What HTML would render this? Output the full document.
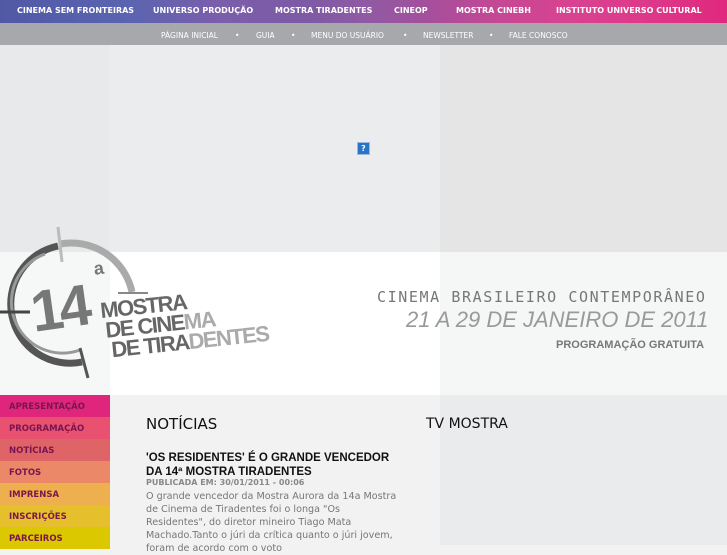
<!DOCTYPE html>
<html><head><meta charset="utf-8"><style>
*{margin:0;padding:0;box-sizing:border-box}
body{width:727px;height:545px;overflow:hidden;font-family:"DejaVu Sans","Liberation Sans",sans-serif;background:#f2f2f2;position:relative}
.a{position:absolute}
#top{left:0;top:0;width:727px;height:23px;background:linear-gradient(90deg,#5159a6 0%,#5b64b0 18%,#7a5eab 30%,#7d5aa5 42%,#8f5aa3 50%,#a2509d 58%,#c34894 68%,#d84391 78%,#dd3a8a 88%,#e0287e 100%)}
#top span{position:absolute;top:6px;color:#fff;font-weight:bold;font-size:8px;letter-spacing:0}
#nav{left:0;top:23px;width:727px;height:22px;background:#a7a8ab}
#nav span{position:absolute;top:8px;color:#fff;font-size:7.5px}
.m{position:absolute;left:0;width:110px;height:22px;font-size:8.5px;font-weight:bold;color:#7a1450;padding:7px 0 0 9px}
</style></head><body>
<div class="a" id="top">
<span style="left:17px">CINEMA SEM FRONTEIRAS</span>
<span style="left:153px">UNIVERSO PRODUÇÃO</span>
<span style="left:275px">MOSTRA TIRADENTES</span>
<span style="left:394px">CINEOP</span>
<span style="left:456px">MOSTRA CINEBH</span>
<span style="left:556px">INSTITUTO UNIVERSO CULTURAL</span>
</div>
<div class="a" id="nav">
<span style="left:161px">PÁGINA INICIAL</span><span style="left:235px">•</span>
<span style="left:256px">GUIA</span><span style="left:291px">•</span>
<span style="left:311px">MENU DO USUÁRIO</span><span style="left:403px">•</span>
<span style="left:423px">NEWSLETTER</span><span style="left:489px">•</span>
<span style="left:509px">FALE CONOSCO</span>
</div>
<div class="a" style="left:0;top:45px;width:110px;height:207px;background:#e8e9eb"></div>
<div class="a" style="left:110px;top:45px;width:330px;height:207px;background:#ebecee"></div>
<div class="a" style="left:440px;top:45px;width:287px;height:207px;background:#e5e5e5"></div>
<div class="a" style="left:357px;top:142px;width:13px;height:13px;background:#2a74c8;border:1px solid #9bb8e0;color:#fff;font-size:8px;text-align:center;line-height:11px;font-weight:bold">?</div>
<div class="a" style="left:0;top:252px;width:110px;height:143px;background:#f6f7f7"></div>
<div class="a" style="left:110px;top:252px;width:330px;height:143px;background:#fff"></div>
<div class="a" style="left:440px;top:252px;width:287px;height:143px;background:#f5f6f6"></div>
<svg class="a" style="left:0;top:222px" width="300" height="160">
<path d="M58 24 A58 58 0 1 0 82 140" fill="none" stroke="#555" stroke-width="7"/>
<path d="M45 32 A48 48 0 1 0 80 128" fill="none" stroke="#999" stroke-width="3"/>
<path d="M60 22 A62 62 0 0 1 132 70" fill="none" stroke="#aaa" stroke-width="7"/>
<line x1="58" y1="5" x2="62" y2="40" stroke="#bbb" stroke-width="3"/>
<line x1="0" y1="90" x2="30" y2="90" stroke="#444" stroke-width="3"/>
<line x1="80" y1="126" x2="88" y2="156" stroke="#555" stroke-width="3"/>
<line x1="118" y1="71" x2="148" y2="71" stroke="#888" stroke-width="2"/>
<g transform="rotate(-8 60 80)">
<text x="30" y="106" font-family="Liberation Sans" font-weight="bold" font-size="58" fill="#777" letter-spacing="-4">14</text>
<text x="98" y="58" font-family="Liberation Sans" font-weight="bold" font-size="18" fill="#777">a</text></g>
<g transform="rotate(-6 180 110)" font-family="Liberation Sans" font-weight="bold" font-size="22" fill="#666" letter-spacing="-1.5">
<text x="103" y="88">MOSTRA</text>
<text x="106" y="108">DE CINE<tspan fill="#aaa">MA</tspan></text>
<text x="110" y="128">DE TIRA<tspan fill="#aaa">DENTES</tspan></text></g>
</svg>
<div class="a" style="left:377px;top:288px;font-size:15px;color:#777;letter-spacing:1.6px;font-family:'DejaVu Sans Mono',monospace">CINEMA BRASILEIRO CONTEMPORÂNEO</div>
<div class="a" style="left:406px;top:307px;font-size:22px;color:#999;font-style:italic;font-family:'Liberation Sans',sans-serif">21 A 29 DE JANEIRO DE 2011</div>
<div class="a" style="left:556px;top:339px;font-size:11px;color:#777;font-weight:bold;font-family:'Liberation Sans',sans-serif">PROGRAMAÇÃO GRATUITA</div>
<div class="a" style="left:440px;top:395px;width:287px;height:150px;background:#eaebed"></div>
<div class="m" style="top:395px;background:#e0267c">APRESENTAÇÃO</div>
<div class="m" style="top:417px;background:#e8516f">PROGRAMAÇÃO</div>
<div class="m" style="top:439px;background:#de6468">NOTÍCIAS</div>
<div class="m" style="top:461px;background:#ea8868">FOTOS</div>
<div class="m" style="top:483px;background:#eeb04e">IMPRENSA</div>
<div class="m" style="top:505px;background:#e6c02c">INSCRIÇÕES</div>
<div class="m" style="top:527px;background:#dcc800">PARCEIROS</div>
<div class="a" style="left:146px;top:415px;font-size:15px;color:#111">NOTÍCIAS</div>
<div class="a" style="left:426px;top:416px;font-size:14px;color:#111">TV MOSTRA</div>
<div class="a" style="left:146px;top:451px;width:260px;font-size:11.5px;font-weight:bold;color:#111;line-height:14px;font-family:'Liberation Sans',sans-serif;white-space:nowrap">'OS RESIDENTES' É O GRANDE VENCEDOR<br>DA 14ª MOSTRA TIRADENTES</div>
<div class="a" style="left:146px;top:478px;font-size:8px;font-weight:bold;color:#888">PUBLICADA EM: 30/01/2011 - 00:06</div>
<div class="a" style="left:146px;top:490px;width:260px;font-size:9.6px;color:#777;line-height:13px;white-space:nowrap">O grande vencedor da Mostra Aurora da 14a Mostra<br>de Cinema de Tiradentes foi o longa "Os<br>Residentes", do diretor mineiro Tiago Mata<br>Machado.Tanto o júri da crítica quanto o júri jovem,<br>foram de acordo com o voto</div>
</body></html>
